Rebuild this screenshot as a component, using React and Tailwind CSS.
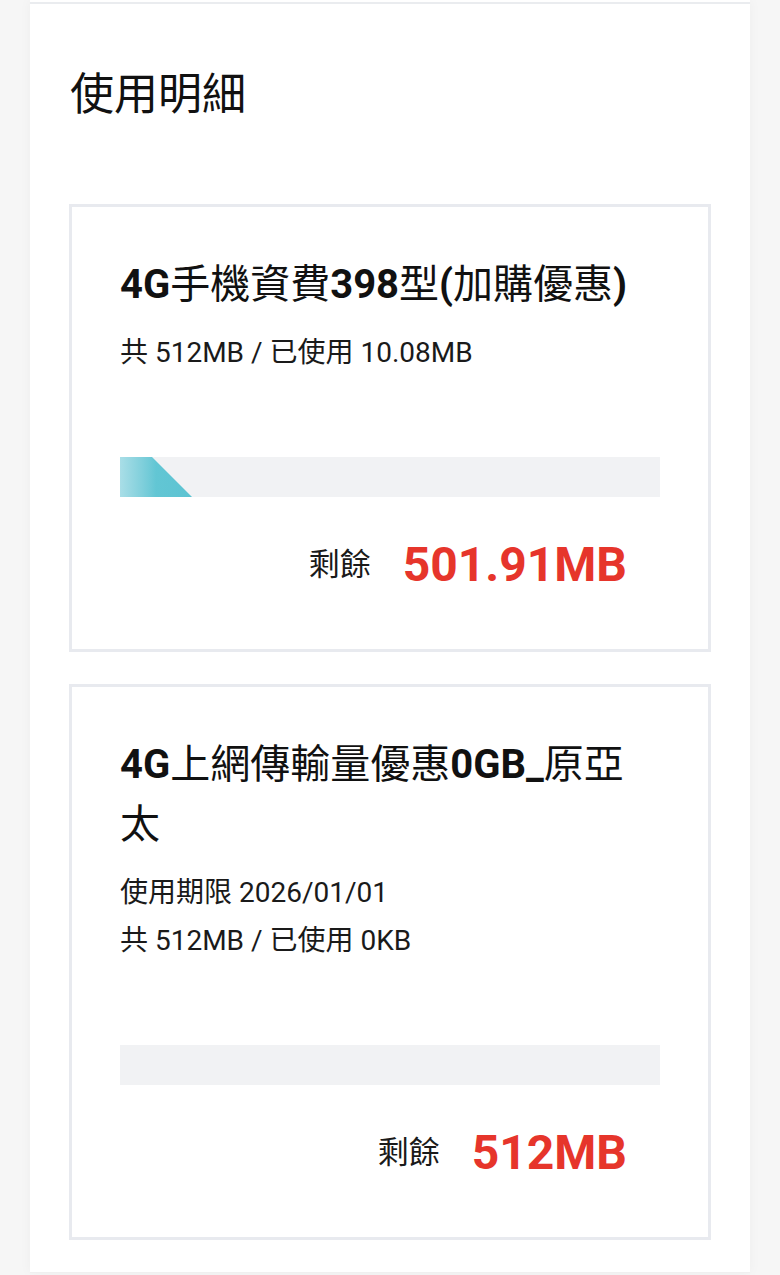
import React from "react";

const plans = [
  {
    name: "4G手機資費398型(加購優惠)",
    lines: ["共 512MB / 已使用 10.08MB"],
    showFill: true,
    remaining: "501.91MB",
  },
  {
    name: "4G上網傳輸量優惠0GB_原亞太",
    lines: ["使用期限 2026/01/01", "共 512MB / 已使用 0KB"],
    showFill: false,
    remaining: "512MB",
  },
];

// Latin runs are bold, CJK runs stay regular (as the device renders it)
const PlanTitle = ({ text }) => {
  const parts = text.match(/[\u3400-\u9fff]+|[^\u3400-\u9fff]+/g) || [];
  return (
    <h3 className="text-[40px] leading-[60px] text-[#111]">
      {parts.map((p, i) =>
        /[\u3400-\u9fff]/.test(p) ? (
          <span key={i} className="font-normal">{p}</span>
        ) : (
          <span key={i} className="font-bold">{p}</span>
        )
      )}
    </h3>
  );
};

const UsageBar = ({ showFill }) => (
  <div className="mt-20 h-10 w-full bg-[#f1f2f4]">
    {showFill && (
      <div className="h-full w-[72px] bg-gradient-to-r from-[#a9dee7] via-[#62c6d4] to-[#5cc3d2] [clip-path:polygon(0_0,32px_0,100%_100%,0_100%)]"></div>
    )}
  </div>
);

const PlanCard = ({ plan }) => (
  <div className="border-[3px] border-[#e8eaef] bg-white p-12">
    <PlanTitle text={plan.name} />
    <div className="mt-3.5">
      {plan.lines.map((line) => (
        <p key={line} className="text-[28px] leading-[48px] text-[#1a1a1a]">
          {line}
        </p>
      ))}
    </div>
    <UsageBar showFill={plan.showFill} />
    <div className="mt-8 flex items-center justify-end pr-[33px] leading-[72px]">
      <span className="text-[31px] text-[#1a1a1a]">剩餘</span>
      <span className="ml-[32px] text-[48px] font-bold text-[#e6352b]">
        {plan.remaining}
      </span>
    </div>
  </div>
);

export default function App() {
  return (
    <div
      className="min-h-[1275px] w-full bg-[#f6f6f6]"
      style={{ fontFamily: 'Roboto, "Noto Sans CJK TC", sans-serif' }}
    >
      <div className="mx-[30px] bg-white shadow-[0_0_12px_rgba(0,0,0,0.04)]">
        {/* end of previous panel */}
        <div className="h-[2px] bg-white"></div>
        <div className="h-[2px] bg-[#eaecef]"></div>

        <div className="px-[39px] pt-[58px] pb-8 border-b border-[#f0f0f0]">
          <h2 className="pl-px text-[44px] leading-[66px] text-[#111]">使用明細</h2>
          <div className="mt-[76px] flex flex-col gap-8">
            {plans.map((plan) => (
              <PlanCard key={plan.name} plan={plan} />
            ))}
          </div>
        </div>
      </div>
    </div>
  );
}
